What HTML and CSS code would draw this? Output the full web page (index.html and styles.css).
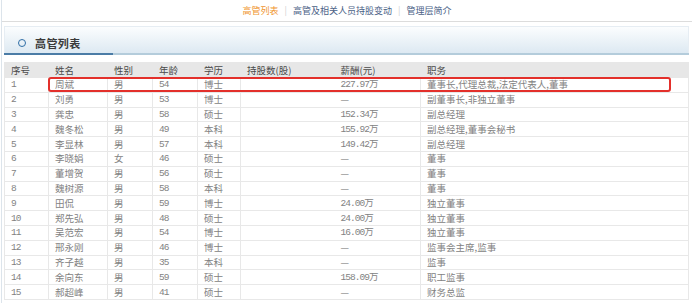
FILE: index.html
```html
<!DOCTYPE html>
<html lang="zh-CN">
<head>
<meta charset="utf-8">
<title>高管列表</title>
<link rel="stylesheet" href="styles.css">
</head>
<body>
<div class="page">
  <div class="tabs">
    <a class="tab active">高管列表</a>
    <span class="sep">|</span>
    <a class="tab">高管及相关人员持股变动</a>
    <span class="sep">|</span>
    <a class="tab">管理层简介</a>
  </div>
  <div class="section">
    <div class="panel">
      <span class="ring"></span>
      <h2 class="title">高管列表</h2>
    </div>
    <div class="panel-line"></div>
    <div class="table-wrap">
      <table class="grid">
        <colgroup>
          <col class="c1"><col class="c2"><col class="c3"><col class="c4"><col class="c5"><col class="c6"><col class="c7"><col>
        </colgroup>
        <thead>
          <tr><th>序号</th><th>姓名</th><th>性别</th><th>年龄</th><th>学历</th><th class="shares">持股数(股)</th><th class="pay">薪酬(元)</th><th>职务</th></tr>
        </thead>
        <tbody>
          <tr><td class="num">1</td><td>周斌</td><td>男</td><td class="num">54</td><td>博士</td><td class="shares"></td><td class="pay num">227.97万</td><td>董事长,代理总裁,法定代表人,董事</td></tr>
          <tr><td class="num">2</td><td>刘勇</td><td>男</td><td class="num">53</td><td>博士</td><td class="shares"></td><td class="pay">—</td><td>副董事长,非独立董事</td></tr>
          <tr><td class="num">3</td><td>龚忠</td><td>男</td><td class="num">58</td><td>硕士</td><td class="shares"></td><td class="pay num">152.34万</td><td>副总经理</td></tr>
          <tr><td class="num">4</td><td>魏冬松</td><td>男</td><td class="num">49</td><td>本科</td><td class="shares"></td><td class="pay num">155.92万</td><td>副总经理,董事会秘书</td></tr>
          <tr><td class="num">5</td><td>李显林</td><td>男</td><td class="num">57</td><td>本科</td><td class="shares"></td><td class="pay num">149.42万</td><td>副总经理</td></tr>
          <tr><td class="num">6</td><td>李晓娟</td><td>女</td><td class="num">46</td><td>硕士</td><td class="shares"></td><td class="pay">—</td><td>董事</td></tr>
          <tr><td class="num">7</td><td>董增贺</td><td>男</td><td class="num">56</td><td>硕士</td><td class="shares"></td><td class="pay">—</td><td>董事</td></tr>
          <tr><td class="num">8</td><td>魏树源</td><td>男</td><td class="num">58</td><td>本科</td><td class="shares"></td><td class="pay">—</td><td>董事</td></tr>
          <tr><td class="num">9</td><td>田侃</td><td>男</td><td class="num">59</td><td>博士</td><td class="shares"></td><td class="pay num">24.00万</td><td>独立董事</td></tr>
          <tr><td class="num">10</td><td>郑先弘</td><td>男</td><td class="num">48</td><td>硕士</td><td class="shares"></td><td class="pay num">24.00万</td><td>独立董事</td></tr>
          <tr><td class="num">11</td><td>吴范宏</td><td>男</td><td class="num">54</td><td>博士</td><td class="shares"></td><td class="pay num">16.00万</td><td>独立董事</td></tr>
          <tr><td class="num">12</td><td>邢永刚</td><td>男</td><td class="num">46</td><td>博士</td><td class="shares"></td><td class="pay">—</td><td>监事会主席,监事</td></tr>
          <tr><td class="num">13</td><td>齐子越</td><td>男</td><td class="num">35</td><td>本科</td><td class="shares"></td><td class="pay">—</td><td>监事</td></tr>
          <tr><td class="num">14</td><td>余向东</td><td>男</td><td class="num">59</td><td>硕士</td><td class="shares"></td><td class="pay num">158.09万</td><td>职工监事</td></tr>
          <tr><td class="num">15</td><td>郝超峰</td><td>男</td><td class="num">41</td><td>硕士</td><td class="shares"></td><td class="pay">—</td><td>财务总监</td></tr>
        </tbody>
      </table>
      <div class="highlight"></div>
    </div>
  </div>
</div>
</body>
</html>
```
FILE: styles.css
```css
html, body {
  margin: 0;
  padding: 0;
  background: #fff;
}
body {
  font-family: "Noto Sans CJK SC", "Liberation Sans", sans-serif;
  color: #666;
}
.page {
  margin-left: 1px;
  border-left: 1px solid #dce4eb;
  min-height: 303px;
}
.tabs {
  height: 21px;
  border-bottom: 1px solid #dcdcdc;
  display: flex;
  justify-content: center;
  align-items: center;
  font-size: 9px;
  line-height: 21px;
}
.tab {
  color: #4a6186;
  text-decoration: none;
}
.tab.active {
  color: #f0962f;
}
.sep {
  color: #cfcfcf;
  margin: 0 6px;
}
.section {
  padding: 4px 3px 0 2px;
}
.panel {
  box-sizing: border-box;
  height: 27px;
  border-top: 1px solid #e6edf3;
  border-left: 1px solid #e6edf3;
  border-right: 1px solid #e6edf3;
  padding: 6px 0 0 13px;
  background: linear-gradient(#fbfdfe, #dde9f2);
  display: flex;
  align-items: center;
}
.ring {
  box-sizing: border-box;
  width: 8px;
  height: 8px;
  border: 1.6px solid #2f6ea6;
  border-radius: 50%;
}
.title {
  margin: 0 0 0 9px;
  font-size: 11px;
  font-weight: bold;
  letter-spacing: 0.4px;
  color: #3a3a3a;
  line-height: 14px;
}
.panel-line {
  height: 2px;
  background: linear-gradient(to right, #4b7ca6 109px, #b4ccdb 109px);
}
.table-wrap {
  position: relative;
  margin-top: 7px;
}
.grid {
  width: 100%;
  table-layout: fixed;
  border-collapse: collapse;
  font-size: 9.5px;
  border: 1px solid #e4e4e4;
}
.c1 { width: 44px; }
.c2 { width: 59px; }
.c3 { width: 45px; }
.c4 { width: 45px; }
.c5 { width: 43px; }
.c6 { width: 94px; }
.c7 { width: 86px; }
.grid th,
.grid td {
  padding: 0 0 0 6px;
  text-align: left;
  white-space: nowrap;
  overflow: hidden;
  line-height: 13px;
  border: 1px solid #e8e8e8;
}
.grid thead tr {
  height: 15px;
  background: #e7e7e7;
}
.grid th {
  font-weight: normal;
  color: #4a4a4a;
  border-color: #e7e7e7;
}
.grid tbody tr {
  height: 14.8px;
}
.grid td {
  color: #828282;
}
.grid .shares {
  border-right: hidden;
}
.grid .pay {
  border-left: hidden;
}
.grid .num {
  font-family: "Liberation Mono", "Noto Sans CJK SC", monospace;
  letter-spacing: -0.95px;
}
.highlight {
  position: absolute;
  left: 44px;
  top: 15px;
  width: 623px;
  height: 15px;
  box-sizing: border-box;
  border: 2px solid #e3302b;
  border-radius: 3px;
}
```
